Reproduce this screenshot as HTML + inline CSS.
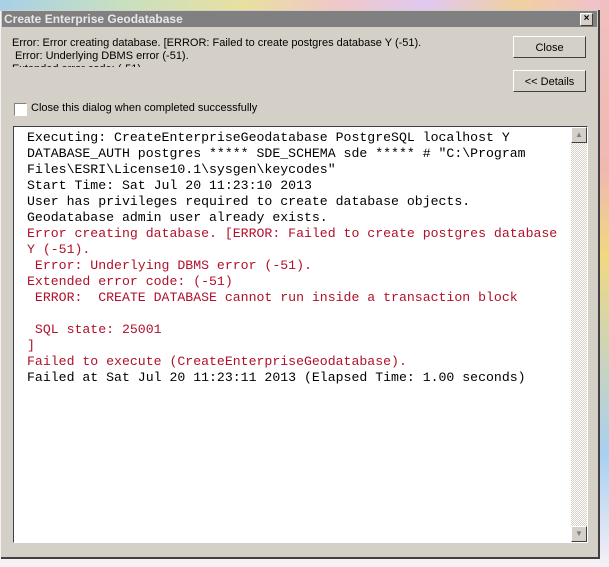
<!DOCTYPE html>
<html><head><style>
body{margin:0;width:609px;height:567px;overflow:hidden;background:#f7f0f5;position:relative;font-family:"Liberation Sans",Tahoma,sans-serif}
.map{position:absolute;left:0;top:0;width:609px;height:11px;background:linear-gradient(90deg,#a8d0e8 0,#c8e0c0 20%,#e8e0a0 40%,#f0c8c8 55%,#e0c8f0 70%,#f0d0a0 85%,#f0c0d0 100%)}
.mapr{position:absolute;left:600px;top:0;width:9px;height:567px;background:linear-gradient(180deg,#f0c0c0 0,#f0b8b0 30%,#f0d880 45%,#a8d0f0 80%,#f6f0f6 100%)}
.dlg{position:absolute;left:1px;top:10px;width:597px;height:547px;background:#d4d0c8;border-right:2px solid #404040;border-bottom:2px solid #404040}
.title{position:absolute;left:1px;top:1px;width:595px;height:16px;background:#808080;color:#e8e8e8;font-size:12px;font-weight:bold;line-height:16px;padding-left:2px;box-sizing:border-box}
.x{position:absolute;right:4px;top:2px;width:11px;height:11px;background:#d4d0c8;border:1px solid #fff;border-right-color:#404040;border-bottom-color:#404040;font-size:10px;line-height:10px;text-align:center;color:#000}
.msg{position:absolute;left:11px;top:27px;font-size:11px;line-height:13px;color:#000;height:30px;overflow:hidden;white-space:pre}
.btn{position:absolute;left:512px;width:73px;height:22px;background:#d4d0c8;border:1px solid #fff;border-right-color:#404040;border-bottom-color:#404040;font-size:11px;text-align:center;line-height:22px;box-sizing:border-box}
.chk{position:absolute;left:13px;top:93px;width:11px;height:11px;background:#fff;border:1px solid #808080;border-right-color:#fff;border-bottom-color:#fff}
.chkl{position:absolute;left:30px;top:92px;font-size:11px}
.box{position:absolute;left:12px;top:116px;width:575px;height:417px;background:#fff;border:1px solid #404040;border-right-color:#fff;border-bottom-color:#fff;box-sizing:border-box}
pre{margin:0;position:absolute;left:13px;top:3px;font-family:"Liberation Mono","Courier New",monospace;font-size:13.2px;line-height:16px;color:#000}
.r{color:#b0102a}
.sb{position:absolute;right:0;top:0;width:16px;height:415px;background:repeating-conic-gradient(#d4d0c8 0 25%,#fff 0 50%) 0 0/2px 2px}
.ar{position:absolute;left:0;width:16px;height:16px;background:#d4d0c8;border:1px solid #fff;border-right-color:#404040;border-bottom-color:#404040;box-sizing:border-box;color:#808080;font-size:8px;text-align:center;line-height:14px}
</style></head><body>
<div class="map"></div><div class="mapr"></div>
<div class="dlg">
<div class="title">Create Enterprise Geodatabase<div class="x">×</div></div>
<div class="msg">Error: Error creating database. [ERROR: Failed to create postgres database Y (-51).
 Error: Underlying DBMS error (-51).
Extended error code: (-51)</div>
<div class="btn" style="top:26px">Close</div>
<div class="btn" style="top:60px">&lt;&lt; Details</div>
<div class="chk"></div><div class="chkl">Close this dialog when completed successfully</div>
<div class="box">
<pre>Executing: CreateEnterpriseGeodatabase PostgreSQL localhost Y
DATABASE_AUTH postgres ***** SDE_SCHEMA sde ***** # "C:\Program
Files\ESRI\License10.1\sysgen\keycodes"
Start Time: Sat Jul 20 11:23:10 2013
User has privileges required to create database objects.
Geodatabase admin user already exists.
<span class="r">Error creating database. [ERROR: Failed to create postgres database
Y (-51).
 Error: Underlying DBMS error (-51).
Extended error code: (-51)
 ERROR:  CREATE DATABASE cannot run inside a transaction block

 SQL state: 25001
]
Failed to execute (CreateEnterpriseGeodatabase).</span>
Failed at Sat Jul 20 11:23:11 2013 (Elapsed Time: 1.00 seconds)</pre>
<div class="sb"><div class="ar" style="top:0">▲</div><div class="ar" style="top:399px">▼</div></div>
</div>
</div>
</body></html>
